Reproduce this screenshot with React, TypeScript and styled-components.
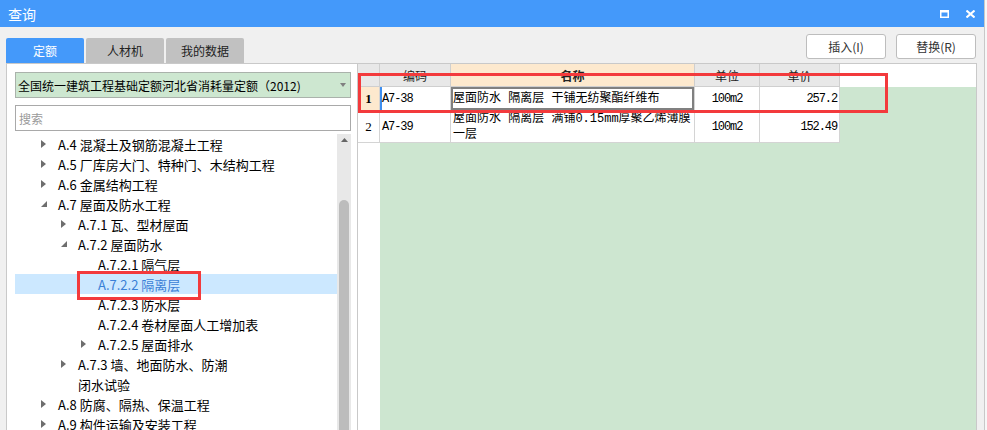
import React from "react";
import styled, { createGlobalStyle } from "styled-components";

const GlobalStyle = createGlobalStyle`
  html, body {
    margin: 0;
    padding: 0;
    background: #f7f7f7;
  }
  body {
    width: 987px;
    height: 430px;
    overflow: hidden;
    font-family: "Noto Sans CJK SC", "Noto Sans", sans-serif;
  }
`;

const Window = styled.div`
  position: relative;
  width: 984px;
  height: 430px;
  background: #f0f0f0;
  border-right: 1px solid #c8c8c8;
  display: flex;
  flex-direction: column;
  overflow: hidden;
`;

const TitleBar = styled.div`
  height: 27px;
  flex: none;
  background: #4499fa;
  color: #fff;
  font-size: 14px;
  display: flex;
  align-items: center;
  justify-content: space-between;
  padding: 0 9px 0 8px;
`;

const TitleIcons = styled.div`
  display: flex;
  align-items: center;
  gap: 17px;
`;

const Toolbar = styled.div`
  height: 36px;
  flex: none;
  display: flex;
  align-items: flex-end;
  justify-content: space-between;
  padding: 0 8px 0 6px;
`;

const Tabs = styled.div`
  display: flex;
  gap: 2px;
`;

const Tab = styled.div<{ $active?: boolean }>`
  width: 78px;
  height: 25px;
  border-radius: 2px 2px 0 0;
  background: ${(p) => (p.$active ? "#4499fa" : "#c1c1c1")};
  color: ${(p) => (p.$active ? "#fff" : "#222")};
  font-size: 12px;
  display: flex;
  align-items: center;
  justify-content: center;
`;

const Actions = styled.div`
  display: flex;
  gap: 10px;
  margin-bottom: 4px;
`;

const ActionButton = styled.button`
  width: 80px;
  height: 25px;
  background: #fff;
  border: 1px solid #bdbdbd;
  border-radius: 3px;
  font-family: "Noto Sans CJK SC", "Noto Sans", sans-serif;
  font-size: 12px;
  color: #333;
  padding: 0;
`;

const Main = styled.div`
  flex: 1;
  min-height: 0;
  display: flex;
  margin: 0 7px 0 6px;
  border: 1px solid #c9c9c9;
  border-bottom: none;
  background: #fff;
`;

const LeftPanel = styled.div`
  width: 350px;
  flex: none;
  display: flex;
  flex-direction: column;
  padding: 8px 6px 0 8px;
  box-sizing: border-box;
`;

const Dropdown = styled.div`
  height: 26px;
  width: 336px;
  box-sizing: border-box;
  border: 1px solid #aab2ab;
  background: #cde7d0;
  display: flex;
  align-items: center;
  justify-content: space-between;
  padding: 0 4px 0 2px;
  font-size: 12px;
  color: #000;
`;

const SearchInput = styled.input`
  margin-top: 7px;
  height: 26px;
  width: 336px;
  box-sizing: border-box;
  border: 1px solid #a9a9a9;
  outline: none;
  padding: 0 3px;
  font-family: "Noto Sans CJK SC", "Noto Sans", sans-serif;
  font-size: 12px;
  &::placeholder {
    color: #9a9a9a;
  }
`;

const Tree = styled.div`
  margin-top: 3px;
  flex: 1;
  min-height: 0;
  display: flex;
`;

const TreeList = styled.div`
  flex: 1;
  overflow: hidden;
`;

const TreeRow = styled.div<{ $level: number; $selected?: boolean }>`
  height: 20px;
  display: flex;
  align-items: center;
  padding-left: ${(p) => 26 + (p.$level - 1) * 20}px;
  background: ${(p) => (p.$selected ? "#cce8ff" : "transparent")};
  color: ${(p) => (p.$selected ? "#3a7fd6" : "#000")};
  font-size: 13px;
  white-space: nowrap;
`;

const Toggle = styled.span`
  width: 17px;
  flex: none;
  display: flex;
  align-items: center;
`;

const ScrollTrack = styled.div`
  width: 14px;
  flex: none;
  background: #e8e8e8;
  display: flex;
  flex-direction: column;
  align-items: center;
`;

const ScrollArrow = styled.div`
  height: 12px;
  display: flex;
  align-items: center;
  justify-content: center;
`;

const ScrollThumb = styled.div`
  margin-top: 54px;
  width: 10px;
  flex: 1;
  background: #bcbcbc;
  border-radius: 5px 5px 0 0;
`;

const RightPanel = styled.div`
  flex: 1;
  display: flex;
  flex-direction: column;
  border-left: 1px solid #c9c9c9;
  font-family: "Liberation Mono", "Noto Sans CJK SC", monospace;
  font-size: 12px;
  color: #000;
`;

const HeaderRow = styled.div`
  display: flex;
  height: 23px;
  flex: none;
`;

const HeaderCell = styled.div<{ $w: number; $current?: boolean }>`
  width: ${(p) => p.$w}px;
  flex: none;
  box-sizing: border-box;
  border-right: 1px solid #cfcfcf;
  border-bottom: 1px solid #cfcfcf;
  background: ${(p) => (p.$current ? "#fde9ce" : "#e8e8e8")};
  font-family: "Noto Sans CJK SC", sans-serif;
  font-weight: ${(p) => (p.$current ? 700 : 400)};
  color: #222;
  display: flex;
  align-items: center;
  justify-content: center;
`;

const GridBody = styled.div`
  flex: 1;
  background: linear-gradient(to right, #fff 22px, #cde6d0 22px);
`;

const DataRow = styled.div<{ $h: number }>`
  display: flex;
  height: ${(p) => p.$h}px;
`;

/* latin-only cells: squeeze the mono font to the half-width look of the original */
const Cell = styled.div<{
  $w: number;
  $align?: "left" | "center" | "right";
}>`
  width: ${(p) => p.$w}px;
  flex: none;
  box-sizing: border-box;
  border-right: 1px solid #d4d4d4;
  border-bottom: 1px solid #d4d4d4;
  background: #fff;
  display: flex;
  align-items: center;
  justify-content: ${(p) =>
    p.$align === "center" ? "center" : p.$align === "right" ? "flex-end" : "flex-start"};
  padding: 0 2px;
  line-height: 16px;
  letter-spacing: -1.1px;
  white-space: nowrap;
`;

const RowNumCell = styled(Cell)<{ $current?: boolean }>`
  background: ${(p) => (p.$current ? "#fde9ce" : "#fff")};
  font-family: "Liberation Serif", serif;
  font-weight: ${(p) => (p.$current ? 700 : 400)};
  font-size: 13px;
  letter-spacing: 0;
`;

const CodeCell = styled(Cell)<{ $current?: boolean }>`
  box-shadow: ${(p) => (p.$current ? "inset 2px 0 0 #3d8ef0" : "none")};
`;

const NameCell = styled(Cell)<{ $focus?: boolean }>`
  box-shadow: ${(p) => (p.$focus ? "inset 0 0 0 2px #808080" : "none")};
  flex-direction: column;
  align-items: flex-start;
  justify-content: center;
  letter-spacing: 0;
`;

const Highlight = styled.div<{ $x: number; $y: number; $w: number; $h: number }>`
  position: absolute;
  left: ${(p) => p.$x}px;
  top: ${(p) => p.$y}px;
  width: ${(p) => p.$w}px;
  height: ${(p) => p.$h}px;
  box-sizing: border-box;
  border: 3px solid #f33a3c;
  pointer-events: none;
`;

const ArrowRight = () => (
  <svg width="5" height="8" viewBox="0 0 5 8">
    <path d="M0 0 L5 4 L0 8 Z" fill="#6e6e6e" />
  </svg>
);

const ArrowDown = () => (
  <svg width="6" height="6" viewBox="0 0 6 6">
    <path d="M6 0 L6 6 L0 6 Z" fill="#6e6e6e" />
  </svg>
);

type Node = { level: number; arrow?: "right" | "down"; text: string; selected?: boolean };

const nodes: Node[] = [
  { level: 1, arrow: "right", text: "A.4 混凝土及钢筋混凝土工程" },
  { level: 1, arrow: "right", text: "A.5 厂库房大门、特种门、木结构工程" },
  { level: 1, arrow: "right", text: "A.6 金属结构工程" },
  { level: 1, arrow: "down", text: "A.7 屋面及防水工程" },
  { level: 2, arrow: "right", text: "A.7.1 瓦、型材屋面" },
  { level: 2, arrow: "down", text: "A.7.2 屋面防水" },
  { level: 3, text: "A.7.2.1 隔气层" },
  { level: 3, text: "A.7.2.2 隔离层", selected: true },
  { level: 3, text: "A.7.2.3 防水层" },
  { level: 3, text: "A.7.2.4 卷材屋面人工增加表" },
  { level: 3, arrow: "right", text: "A.7.2.5 屋面排水" },
  { level: 2, arrow: "right", text: "A.7.3 墙、地面防水、防潮" },
  { level: 2, text: "闭水试验" },
  { level: 1, arrow: "right", text: "A.8 防腐、隔热、保温工程" },
  { level: 1, arrow: "right", text: "A.9 构件运输及安装工程" },
];

const cols = { num: 22, code: 71, name: 244, unit: 65, price: 80 };

export default function App() {
  return (
    <>
      <GlobalStyle />
      <Window>
        <TitleBar>
          <span>查询</span>
          <TitleIcons>
            <svg width="9" height="8" viewBox="0 0 9 8">
              <rect x="0.75" y="1" width="7.5" height="6.25" fill="none" stroke="#fff" strokeWidth="1.5" />
              <rect x="0" y="0" width="9" height="2.5" fill="#fff" />
            </svg>
            <svg width="9" height="8" viewBox="0 0 9 8">
              <path d="M0.5 0.5 L8.5 7.5 M8.5 0.5 L0.5 7.5" stroke="#fff" strokeWidth="2" />
            </svg>
          </TitleIcons>
        </TitleBar>

        <Toolbar>
          <Tabs>
            <Tab $active>定额</Tab>
            <Tab>人材机</Tab>
            <Tab>我的数据</Tab>
          </Tabs>
          <Actions>
            <ActionButton>插入(I)</ActionButton>
            <ActionButton>替换(R)</ActionButton>
          </Actions>
        </Toolbar>

        <Main>
          <LeftPanel>
            <Dropdown>
              <span>全国统一建筑工程基础定额河北省消耗量定额（2012)</span>
              <svg width="6" height="4" viewBox="0 0 6 4">
                <path d="M0 0 L6 0 L3 4 Z" fill="#808080" />
              </svg>
            </Dropdown>
            <SearchInput placeholder="搜索" />
            <Tree>
              <TreeList>
                {nodes.map((n) => (
                  <TreeRow key={n.text} $level={n.level} $selected={n.selected}>
                    <Toggle>
                      {n.arrow === "right" && <ArrowRight />}
                      {n.arrow === "down" && <ArrowDown />}
                    </Toggle>
                    {n.text}
                  </TreeRow>
                ))}
              </TreeList>
              <ScrollTrack>
                <ScrollArrow>
                  <svg width="7" height="4" viewBox="0 0 7 4">
                    <path d="M0 4 L3.5 0 L7 4 Z" fill="#666" />
                  </svg>
                </ScrollArrow>
                <ScrollThumb />
              </ScrollTrack>
            </Tree>
          </LeftPanel>

          <RightPanel>
            <HeaderRow>
              <HeaderCell $w={cols.num} />
              <HeaderCell $w={cols.code}>编码</HeaderCell>
              <HeaderCell $w={cols.name} $current>
                名称
              </HeaderCell>
              <HeaderCell $w={cols.unit}>单位</HeaderCell>
              <HeaderCell $w={cols.price}>单价</HeaderCell>
            </HeaderRow>
            <GridBody>
              <DataRow $h={24}>
                <RowNumCell $w={cols.num} $align="center" $current>
                  1
                </RowNumCell>
                <CodeCell $w={cols.code} $current>
                  A7-38
                </CodeCell>
                <NameCell $w={cols.name} $focus>
                  <span>屋面防水 隔离层 干铺无纺聚酯纤维布</span>
                </NameCell>
                <Cell $w={cols.unit} $align="center">
                  100m2
                </Cell>
                <Cell $w={cols.price} $align="right">
                  257.2
                </Cell>
              </DataRow>
              <DataRow $h={32}>
                <RowNumCell $w={cols.num} $align="center">
                  2
                </RowNumCell>
                <CodeCell $w={cols.code}>A7-39</CodeCell>
                <NameCell $w={cols.name}>
                  <span>屋面防水 隔离层 满铺0.15mm厚聚乙烯薄膜</span>
                  <span>一层</span>
                </NameCell>
                <Cell $w={cols.unit} $align="center">
                  100m2
                </Cell>
                <Cell $w={cols.price} $align="right">
                  152.49
                </Cell>
              </DataRow>
            </GridBody>
          </RightPanel>
        </Main>

        <Highlight $x={77} $y={271} $w={124} $h={29} />
        <Highlight $x={358} $y={73} $w={530} $h={40} />
      </Window>
    </>
  );
}
